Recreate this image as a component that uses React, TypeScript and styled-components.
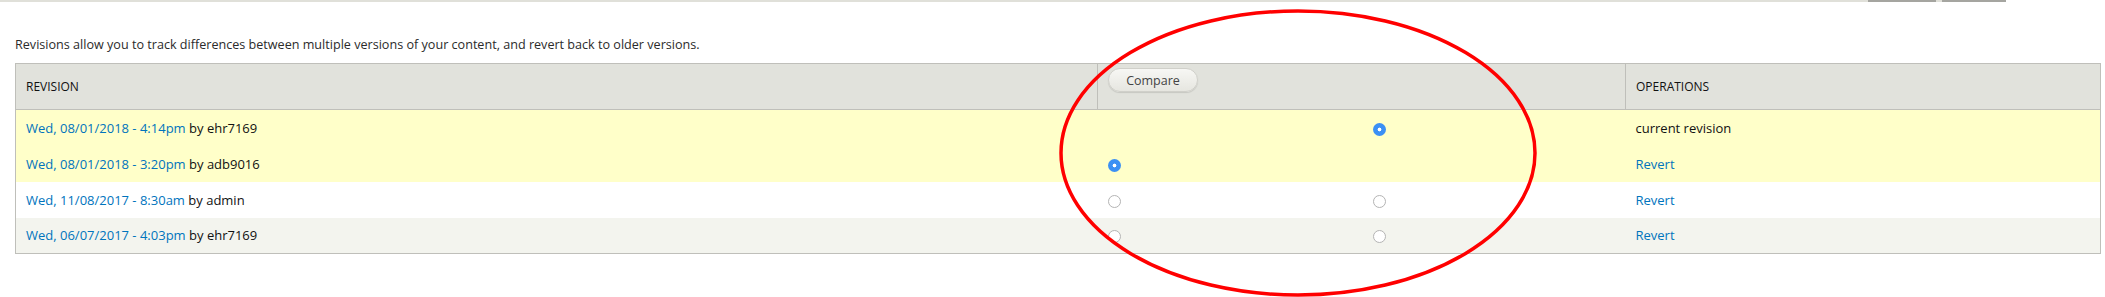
import React from 'react';
import styled, { createGlobalStyle, css } from 'styled-components';

const GlobalStyle = createGlobalStyle`
  html, body {
    margin: 0;
    padding: 0;
    background: #ffffff;
  }
  body {
    font-family: "Open Sans", "Liberation Sans", sans-serif;
    font-size: 12px;
    color: #333;
  }
`;

const Page = styled.div`
  position: relative;
  width: 2105px;
  height: 297px;
  overflow: hidden;
`;

// remains of the tab bar above the content
const TopStrip = styled.div`
  display: flex;
  height: 2px;
  width: 2006px;
`;

const StripPart = styled.div<{ $dark?: boolean; $w?: number }>`
  height: 100%;
  background: ${p => (p.$dark ? '#a5a5a0' : '#e0e0d9')};
  ${p => (p.$w ? css`width: ${p.$w}px; flex: none;` : css`flex: 1;`)}
`;

const Description = styled.p`
  margin: 34px 0 0 15px;
  font-size: 12.6px;
  line-height: 18px;
  color: #2b2b2b;
`;

const Table = styled.table`
  margin: 9px 0 0 15px;
  width: 2085px;
  table-layout: fixed;
  border-collapse: collapse;
  border: 1px solid #bfbfba;
`;

const HeadRow = styled.tr`
  height: 46px;
`;

const HeadCell = styled.th<{ $top?: boolean }>`
  padding: ${p => (p.$top ? '4px 10px 0' : '0 10px')};
  background: #e1e2dc;
  border: 1px solid #bfbfba;
  text-align: left;
  font-weight: normal;
  font-size: 12px;
  text-transform: uppercase;
  color: #111;
  vertical-align: ${p => (p.$top ? 'top' : 'middle')};
`;

const CompareButton = styled.button`
  display: block;
  height: 24px;
  width: 90px;
  padding: 0;
  border: 1px solid #d0d0ca;
  border-radius: 12px;
  background: linear-gradient(#f7f7f4, #e6e6e0);
  box-shadow: 0 1px 1px rgba(0, 0, 0, 0.12);
  font-family: inherit;
  font-size: 12.5px;
  color: #444;
  text-transform: none;
`;

const rowBg = {
  current: '#ffffc9',
  odd: '#ffffff',
  even: '#f3f4ee',
};

const Row = styled.tr<{ $kind: keyof typeof rowBg }>`
  height: 36px;
  background: ${p => rowBg[p.$kind]};
`;

const Cell = styled.td`
  padding: 0 10px;
  vertical-align: middle;
  font-size: 13px;
  color: #111;
`;

const RevLink = styled.a`
  color: #0074bd;
  text-decoration: none;
`;

const Radio = styled.input.attrs({ type: 'radio' })`
  appearance: none;
  display: block;
  margin: 3px 0 0;
  width: 13px;
  height: 13px;
  border-radius: 50%;
  border: 1px solid #b4b4b4;
  background: #fff;
  box-sizing: border-box;

  &:checked {
    border: none;
    background: radial-gradient(circle, #fff 0 1.6px, #3b90f4 2.2px);
  }
`;

const Ring = styled.svg`
  position: absolute;
  left: 0;
  top: 0;
  pointer-events: none;
`;

const revisions = [
  { date: 'Wed, 08/01/2018 - 4:14pm', user: 'ehr7169', kind: 'current', left: null, right: true, op: 'current revision' },
  { date: 'Wed, 08/01/2018 - 3:20pm', user: 'adb9016', kind: 'current', left: true, right: null, op: 'Revert' },
  { date: 'Wed, 11/08/2017 - 8:30am', user: 'admin', kind: 'odd', left: false, right: false, op: 'Revert' },
  { date: 'Wed, 06/07/2017 - 4:03pm', user: 'ehr7169', kind: 'even', left: false, right: false, op: 'Revert' },
] as const;

export default function App() {
  return (
    <Page>
      <GlobalStyle />
      <TopStrip>
        <StripPart />
        <StripPart $dark $w={68} />
        <StripPart $w={6} />
        <StripPart $dark $w={64} />
      </TopStrip>
      <Description>
        Revisions allow you to track differences between multiple versions of your content, and revert back to older versions.
      </Description>
      <Table>
        <colgroup>
          <col style={{ width: 1082 }} />
          <col style={{ width: 265 }} />
          <col style={{ width: 263 }} />
          <col style={{ width: 475 }} />
        </colgroup>
        <thead>
          <HeadRow>
            <HeadCell>Revision</HeadCell>
            <HeadCell colSpan={2} $top>
              <CompareButton type="button">Compare</CompareButton>
            </HeadCell>
            <HeadCell>Operations</HeadCell>
          </HeadRow>
        </thead>
        <tbody>
          {revisions.map((r, i) => (
            <Row key={i} $kind={r.kind}>
              <Cell>
                <RevLink href="#">{r.date}</RevLink> by {r.user}
              </Cell>
              <Cell>
                {r.left !== null && <Radio name="left" defaultChecked={r.left} />}
              </Cell>
              <Cell>
                {r.right !== null && <Radio name="right" defaultChecked={r.right} />}
              </Cell>
              <Cell>
                {r.op === 'Revert' ? <RevLink href="#">Revert</RevLink> : r.op}
              </Cell>
            </Row>
          ))}
        </tbody>
      </Table>
      <Ring width="2105" height="297" viewBox="0 0 2105 297">
        <ellipse cx="1298" cy="153" rx="237" ry="142" fill="none" stroke="#f00" strokeWidth="3.5" />
      </Ring>
    </Page>
  );
}
